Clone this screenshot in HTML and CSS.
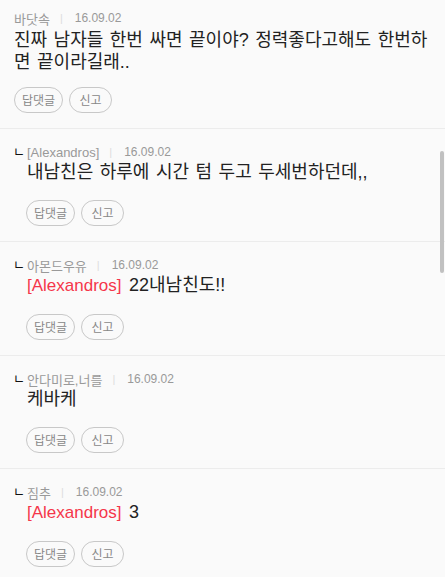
FILE: index.html
```html
<!DOCTYPE html>
<html lang="ko">
<head>
<meta charset="utf-8">
<title>댓글</title>
<link rel="stylesheet" href="styles.css">
</head>
<body>
<div class="list">
  <div class="item first">
    <div class="meta"><span class="name">바닷속</span><span class="bar">|</span><span class="date">16.09.02</span></div>
    <div class="body">진짜 남자들 한번 싸면 끝이야? 정력좋다고해도 한번하면 끝이라길래..</div>
    <div class="btns"><button class="btn">답댓글</button><button class="btn">신고</button></div>
  </div>
  <div class="item reply">
    <div class="meta"><span class="arrow">ㄴ</span><span class="name">[Alexandros]</span><span class="bar">|</span><span class="date">16.09.02</span></div>
    <div class="body">내남친은 하루에 시간 텀 두고 두세번하던데,,</div>
    <div class="btns"><button class="btn">답댓글</button><button class="btn">신고</button></div>
  </div>
  <div class="item reply">
    <div class="meta"><span class="arrow">ㄴ</span><span class="name">아몬드우유</span><span class="bar">|</span><span class="date">16.09.02</span></div>
    <div class="body"><span class="mention">[Alexandros]</span> 22내남친도!!</div>
    <div class="btns"><button class="btn">답댓글</button><button class="btn">신고</button></div>
  </div>
  <div class="item reply">
    <div class="meta"><span class="arrow">ㄴ</span><span class="name">안다미로,너를</span><span class="bar">|</span><span class="date">16.09.02</span></div>
    <div class="body">케바케</div>
    <div class="btns"><button class="btn">답댓글</button><button class="btn">신고</button></div>
  </div>
  <div class="item reply">
    <div class="meta"><span class="arrow">ㄴ</span><span class="name">짐추</span><span class="bar">|</span><span class="date">16.09.02</span></div>
    <div class="body"><span class="mention">[Alexandros]</span> 3</div>
    <div class="btns"><button class="btn">답댓글</button><button class="btn">신고</button></div>
  </div>
</div>
<div class="thumb"></div>
</body>
</html>
```
FILE: styles.css
```css
html, body {
  margin: 0;
  padding: 0;
  height: 100%;
  overflow: hidden;
  background: #fafafa;
}
body {
  font-family: "Liberation Sans", "Noto Sans CJK KR", sans-serif;
  color: #222;
  position: relative;
}
.list {
  display: flex;
  flex-direction: column;
}
.item {
  padding: 14px 10px 15px 14px;
  border-bottom: 1px solid #ececec;
}
.item.first {
  padding-top: 9px;
}
.item.first .body {
  margin-top: 2px;
}
.item.first .btns {
  margin-top: 14px;
}
.item.reply {
  padding-left: 13px;
}
.meta {
  display: flex;
  align-items: center;
  height: 18px;
  font-size: 13px;
  color: #999;
}
.arrow {
  color: #111;
  width: 14px;
  font-size: 13px;
  line-height: 13px;
  margin-top: -1px;
}
.bar {
  color: #ddd;
  margin: 0 10px 0 10px;
  font-size: 11px;
}
.date {
  margin-left: 2px;
  font-size: 12px;
}
.body {
  font-size: 18px;
  line-height: 22px;
  color: #222;
  word-break: break-all;
  word-spacing: 1.5px;
}
.reply .body {
  padding-left: 14px;
}
.mention {
  color: #f5364a;
  font-size: 17px;
  margin-right: 1px;
  word-spacing: 0;
}
.btns {
  display: flex;
  gap: 6px;
  margin-top: 17px;
}
.reply .btns {
  padding-left: 13px;
}
.btn {
  height: 26px;
  min-width: 43px;
  padding: 0 7px;
  border: 1px solid #c8c8c8;
  border-radius: 13px;
  background: #fafafa;
  color: #888;
  font-family: "Noto Sans CJK KR", sans-serif;
  font-size: 12px;
  line-height: 24px;
}
.thumb {
  position: absolute;
  right: 1px;
  top: 151px;
  width: 4px;
  height: 122px;
  border-radius: 2px;
  background: #c1c1c1;
}
```
